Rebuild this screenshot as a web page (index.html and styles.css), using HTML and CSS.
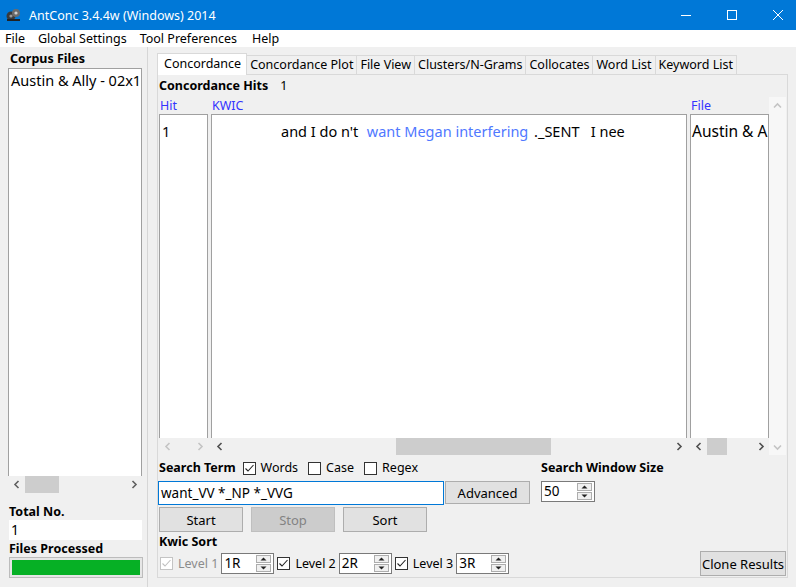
FILE: index.html
```html
<!DOCTYPE html>
<html>
<head>
<meta charset="utf-8">
<title>AntConc</title>
<link rel="stylesheet" href="styles.css">
</head>
<body>
<div class="titlebar">
  <svg class="appicon" viewBox="0 0 15 14"><circle cx="5" cy="8" r="4.5" fill="#3a3a3a"/><circle cx="10" cy="5" r="4" fill="#6b6b6b"/><circle cx="10" cy="5" r="1.6" fill="#cfcfcf"/><circle cx="5" cy="8" r="1.6" fill="#9a9a9a"/><rect x="1" y="11" width="13" height="2" fill="#222"/></svg>
  <span class="title">AntConc 3.4.4w (Windows) 2014</span>
  <div class="controls">
    <span class="ctl"><svg width="12" height="12" viewBox="0 0 12 12"><line x1="1" y1="6.5" x2="11" y2="6.5" stroke="#fff" stroke-width="1"/></svg></span>
    <span class="ctl"><svg width="12" height="12" viewBox="0 0 12 12"><rect x="1.5" y="1.5" width="9" height="9" fill="none" stroke="#fff" stroke-width="1"/></svg></span>
    <span class="ctl"><svg width="12" height="12" viewBox="0 0 12 12"><path d="M1 1 L11 11 M11 1 L1 11" stroke="#fff" stroke-width="1"/></svg></span>
  </div>
</div>
<div class="menubar">
  <span class="menu">File</span>
  <span class="menu">Global Settings</span>
  <span class="menu">Tool Preferences</span>
  <span class="menu">Help</span>
</div>
<div class="main">
  <aside class="left">
    <div class="label">Corpus Files</div>
    <div class="listbox">
      <div class="list-area"><div class="list-item">Austin &amp; Ally - 02x11</div></div>
      <div class="hs">
        <span class="arr"><svg width="8" height="9" viewBox="0 0 8 9"><polyline points="5.5,1 2,4.5 5.5,8" fill="none" stroke="#606060" stroke-width="1.6"/></svg></span>
        <span class="thumb thumb-left"></span>
        <span class="spacer"></span>
        <span class="arr"><svg width="8" height="9" viewBox="0 0 8 9"><polyline points="2.5,1 6,4.5 2.5,8" fill="none" stroke="#606060" stroke-width="1.6"/></svg></span>
      </div>
    </div>
    <div class="label total">Total No.</div>
    <div class="valuebox">1</div>
    <div class="label">Files Processed</div>
    <div class="progress"><div class="bar"></div></div>
  </aside>
  <section class="right">
    <div class="tabs">
      <span class="tab active">Concordance</span>
      <span class="tab">Concordance Plot</span>
      <span class="tab">File View</span>
      <span class="tab">Clusters/N-Grams</span>
      <span class="tab">Collocates</span>
      <span class="tab">Word List</span>
      <span class="tab">Keyword List</span>
    </div>
    <div class="panel">
      <div class="hits"><b>Concordance Hits</b><span class="hitcount">1</span></div>
      <div class="results">
        <div class="col col-hit">
          <div class="colhead">Hit</div>
          <div class="colbox"><div class="cell">1</div></div>
          <div class="hs">
            <span class="arr"><svg width="8" height="9" viewBox="0 0 8 9"><polyline points="5.5,1 2,4.5 5.5,8" fill="none" stroke="#c4c4c4" stroke-width="1.6"/></svg></span>
            <span class="spacer"></span>
            <span class="arr"><svg width="8" height="9" viewBox="0 0 8 9"><polyline points="2.5,1 6,4.5 2.5,8" fill="none" stroke="#c4c4c4" stroke-width="1.6"/></svg></span>
          </div>
        </div>
        <div class="col col-kwic">
          <div class="colhead">KWIC</div>
          <div class="colbox"><div class="cell kwic">and I do n't&nbsp; <span class="hit">want Megan interfering</span> ._SENT&nbsp;&nbsp; I nee</div></div>
          <div class="hs">
            <span class="arr"><svg width="8" height="9" viewBox="0 0 8 9"><polyline points="5.5,1 2,4.5 5.5,8" fill="none" stroke="#505050" stroke-width="1.6"/></svg></span>
            <span class="thumb" style="margin-left:168px;width:155px"></span>
            <span class="spacer"></span>
            <span class="arr"><svg width="8" height="9" viewBox="0 0 8 9"><polyline points="2.5,1 6,4.5 2.5,8" fill="none" stroke="#505050" stroke-width="1.6"/></svg></span>
          </div>
        </div>
        <div class="col col-file">
          <div class="colhead">File</div>
          <div class="colbox"><div class="cell file">Austin &amp; Ally - 02x11</div></div>
          <div class="hs">
            <span class="arr"><svg width="8" height="9" viewBox="0 0 8 9"><polyline points="5.5,1 2,4.5 5.5,8" fill="none" stroke="#505050" stroke-width="1.6"/></svg></span>
            <span class="thumb" style="width:20px"></span>
            <span class="spacer"></span>
            <span class="arr"><svg width="8" height="9" viewBox="0 0 8 9"><polyline points="2.5,1 6,4.5 2.5,8" fill="none" stroke="#505050" stroke-width="1.6"/></svg></span>
          </div>
        </div>
        <div class="vscroll">
          <span class="varr"><svg width="9" height="8" viewBox="0 0 9 8"><polyline points="1,5.5 4.5,2 8,5.5" fill="none" stroke="#c4c4c4" stroke-width="1.6"/></svg></span>
          <span class="spacer"></span>
          <span class="varr"><svg width="9" height="8" viewBox="0 0 9 8"><polyline points="1,2.5 4.5,6 8,2.5" fill="none" stroke="#c4c4c4" stroke-width="1.6"/></svg></span>
        </div>
      </div>
      <div class="search">
        <div class="search-left">
          <div class="search-row">
            <b>Search Term</b>
            <span class="chk first"><span class="box"><svg width="11" height="11" viewBox="0 0 11 11"><polyline points="1.5,5.5 4,8 9.5,2" fill="none" stroke="#222" stroke-width="1.1"/></svg></span>Words</span>
            <span class="chk"><span class="box"></span>Case</span>
            <span class="chk"><span class="box"></span>Regex</span>
          </div>
          <div class="input-row">
            <div class="input">want_VV *_NP *_VVG</div>
            <span class="btn adv">Advanced</span>
          </div>
          <div class="btn-row">
            <span class="btn action">Start</span>
            <span class="btn action disabled">Stop</span>
            <span class="btn action">Sort</span>
          </div>
        </div>
        <div class="search-right">
          <b>Search Window Size</b>
          <div class="spin spin-win">
            <span class="spin-val">50</span>
            <span class="spin-btns">
              <span class="sb"><svg width="7" height="4" viewBox="0 0 7 4"><polygon points="0.5,3.5 3.5,0.5 6.5,3.5" fill="#222"/></svg></span>
              <span class="sb"><svg width="7" height="4" viewBox="0 0 7 4"><polygon points="0.5,0.5 3.5,3.5 6.5,0.5" fill="#222"/></svg></span>
            </span>
          </div>
        </div>
      </div>
      <div class="kwicsort"><b>Kwic Sort</b></div>
      <div class="level-row">
        <span class="chk level dis"><span class="box"><svg width="11" height="11" viewBox="0 0 11 11"><polyline points="1.5,5.5 4,8 9.5,2" fill="none" stroke="#c0c0c0" stroke-width="1.1"/></svg></span>Level 1</span>
        <div class="spin">
          <span class="spin-val">1R</span>
          <span class="spin-btns">
            <span class="sb"><svg width="7" height="4" viewBox="0 0 7 4"><polygon points="0.5,3.5 3.5,0.5 6.5,3.5" fill="#222"/></svg></span>
            <span class="sb"><svg width="7" height="4" viewBox="0 0 7 4"><polygon points="0.5,0.5 3.5,3.5 6.5,0.5" fill="#222"/></svg></span>
          </span>
        </div>
        <span class="chk level"><span class="box"><svg width="11" height="11" viewBox="0 0 11 11"><polyline points="1.5,5.5 4,8 9.5,2" fill="none" stroke="#222" stroke-width="1.1"/></svg></span>Level 2</span>
        <div class="spin">
          <span class="spin-val">2R</span>
          <span class="spin-btns">
            <span class="sb"><svg width="7" height="4" viewBox="0 0 7 4"><polygon points="0.5,3.5 3.5,0.5 6.5,3.5" fill="#222"/></svg></span>
            <span class="sb"><svg width="7" height="4" viewBox="0 0 7 4"><polygon points="0.5,0.5 3.5,3.5 6.5,0.5" fill="#222"/></svg></span>
          </span>
        </div>
        <span class="chk level"><span class="box"><svg width="11" height="11" viewBox="0 0 11 11"><polyline points="1.5,5.5 4,8 9.5,2" fill="none" stroke="#222" stroke-width="1.1"/></svg></span>Level 3</span>
        <div class="spin">
          <span class="spin-val">3R</span>
          <span class="spin-btns">
            <span class="sb"><svg width="7" height="4" viewBox="0 0 7 4"><polygon points="0.5,3.5 3.5,0.5 6.5,3.5" fill="#222"/></svg></span>
            <span class="sb"><svg width="7" height="4" viewBox="0 0 7 4"><polygon points="0.5,0.5 3.5,3.5 6.5,0.5" fill="#222"/></svg></span>
          </span>
        </div>
        <span class="btn clone">Clone Results</span>
      </div>
    </div>
  </section>
</div>
</body>
</html>
```
FILE: styles.css
```css
* { box-sizing: border-box; margin: 0; padding: 0; }
html, body { width: 796px; height: 587px; overflow: hidden; }
body {
  background: #f0f0f0;
  font-family: "Noto Sans", "Open Sans", sans-serif;
  font-size: 12.5px;
  color: #000;
}
b { font-weight: bold; }

/* title bar */
.titlebar { height: 30px; background: #0078d7; color: #fff; display: flex; align-items: center; }
.appicon { margin-left: 6px; width: 15px; height: 14px; }
.title { margin-left: 8px; font-size: 12.5px; }
.controls { margin-left: auto; margin-right: -5px; display: flex; height: 30px; }
.ctl { width: 46px; height: 30px; display: flex; align-items: center; justify-content: center; }

/* menu bar */
.menubar { height: 17px; background: #fff; display: flex; align-items: center; line-height: 17px; padding-left: 0; }
.menu { padding: 0 6.5px; }
.menu:first-child { padding-left: 5px; }
.menu:last-child { margin-left: 2px; }

/* main */
.main { display: flex; height: 540px; }
.left { width: 148px; border-right: 1px solid #d6d6d6; padding-top: 3px; }
.label { font-weight: bold; line-height: 18px; height: 16px; padding-left: 9px; }
.label:first-child { padding-left: 10px; }
.listbox { margin: 2px 0 0 8px; width: 134px; height: 425px; display: flex; flex-direction: column; }
.list-area { flex: 1; background: #fff; border: 1px solid #a0a0a0; border-bottom: none; overflow: hidden; }
.list-item { font-size: 14.5px; line-height: 20px; padding: 1px 0 0 2px; white-space: nowrap; }
.total { margin-top: 10px; }
.valuebox { margin: 1px 0 0 9px; width: 133px; height: 20px; background: #fff; font-size: 14px; line-height: 20px; padding-left: 2px; }
.progress { margin: 1px 0 0 9px; width: 134px; height: 21px; border: 1px solid #bcbcbc; background: #e6e6e6; padding: 2px; }
.bar { width: 100%; height: 100%; background: #06b025; }

/* scrollbars */
.hs { display: flex; height: 17px; align-items: stretch; flex: none; }
.arr { width: 17px; display: flex; align-items: center; justify-content: center; flex: none; }
.thumb { background: #cdcdcd; flex: none; }
.thumb-left { width: 34px; }
.spacer { flex: 1; }

/* right */
.right { flex: 1; padding: 6px 0 0 9px; }
.tabs { display: flex; align-items: flex-end; height: 21px; position: relative; z-index: 1; }
.tab { height: 19px; line-height: 17px; padding: 0 3px; border: 1px solid #d9d9d9; border-bottom: none; background: #f0f0f0; margin-left: -1px; white-space: nowrap; }
.tab.active { height: 22px; line-height: 19px; background: #fff; padding: 0 5px 0 6px; margin-left: 0; margin-bottom: -1px; position: relative; z-index: 2; }
.panel { width: 631px; height: 504px; border: 1px solid #d9d9d9; background: #f0f0f0; }

.hits { height: 16px; line-height: 18px; margin-top: 2px; padding-left: 1px; display: flex; }
.hitcount { margin-left: 12px; }

.results { display: flex; margin-top: 4px; padding-left: 1px; height: 358px; }
.col { display: flex; flex-direction: column; }
.col-hit { width: 49px; }
.col-kwic { width: 476px; margin-left: 3px; }
.col-file { width: 79px; margin-left: 3px; }
.colhead { height: 17px; line-height: 17px; color: #3333ff; padding-left: 1px; }
.colbox { height: 324px; background: #fff; border: 1px solid #a0a0a0; border-bottom: none; overflow: hidden; }
.cell { font-size: 14.5px; line-height: 20px; padding: 6px 0 0 2px; white-space: nowrap; }
.cell.kwic { padding-left: 69px; }
.cell.file { padding-left: 1px; font-size: 15.5px; }
.hit { color: #5078ff; margin: 0 2px 0 1px; }
.vscroll { width: 17px; background: #f7f7f7; display: flex; flex-direction: column; }
.varr { height: 17px; display: flex; align-items: center; justify-content: center; }

/* search */
.search { display: flex; margin-top: 5px; }
.search-left { width: 383px; }
.search-row { height: 16px; line-height: 16px; display: flex; align-items: center; padding-left: 1px; }
.chk { display: flex; align-items: center; margin-left: 10px; white-space: nowrap; }
.chk.first { margin-left: 7px; }
.box { width: 13px; height: 13px; border: 1px solid #333; background: #fff; margin-right: 5px; display: flex; align-items: center; justify-content: center; flex: none; }
.input-row { display: flex; margin-top: 5px; }
.input { width: 286px; height: 24px; border: 1px solid #0078d7; background: #fff; font-size: 13.5px; line-height: 22px; padding-left: 2px; white-space: nowrap; }
.btn { display: flex; align-items: center; justify-content: center; background: #e1e1e1; border: 1px solid #adadad; white-space: nowrap; }
.adv { width: 85px; height: 23px; margin-left: 1px; font-size: 13px; }
.btn-row { display: flex; margin-top: 2px; padding-left: 1px; gap: 8px; }
.action { width: 84px; height: 25px; font-size: 13px; }
.action.disabled { background: #cccccc; border-color: #bfbfbf; color: #838383; }
.search-right { display: flex; flex-direction: column; }
.search-right b { line-height: 16px; height: 16px; }

.spin { width: 53px; height: 21px; border: 1px solid #7a7a7a; background: #fff; display: flex; align-items: center; flex: none; }
.spin-win { width: 54px; margin-top: 5px; }
.spin-val { flex: 1; font-size: 13.5px; line-height: 19px; padding-left: 2px; }
.spin-btns { display: flex; flex-direction: column; gap: 1px; margin-right: 2px; }
.sb { width: 15px; height: 8px; border: 1px solid #adadad; background: #f0f0f0; display: flex; align-items: center; justify-content: center; }

.kwicsort { height: 16px; line-height: 18px; margin-top: 1px; padding-left: 1px; }
.level-row { display: flex; align-items: center; height: 25px; margin-top: 2px; padding-left: 2px; }
.chk.level { margin-left: 3px; margin-right: 3px; }
.chk.level:first-child { margin-left: 0; }
.chk.dis { color: #8c8c8c; }
.chk.dis .box { border-color: #c4c4c4; }
.clone { margin-left: auto; margin-right: 1px; width: 86px; height: 25px; font-size: 13px; }
```
